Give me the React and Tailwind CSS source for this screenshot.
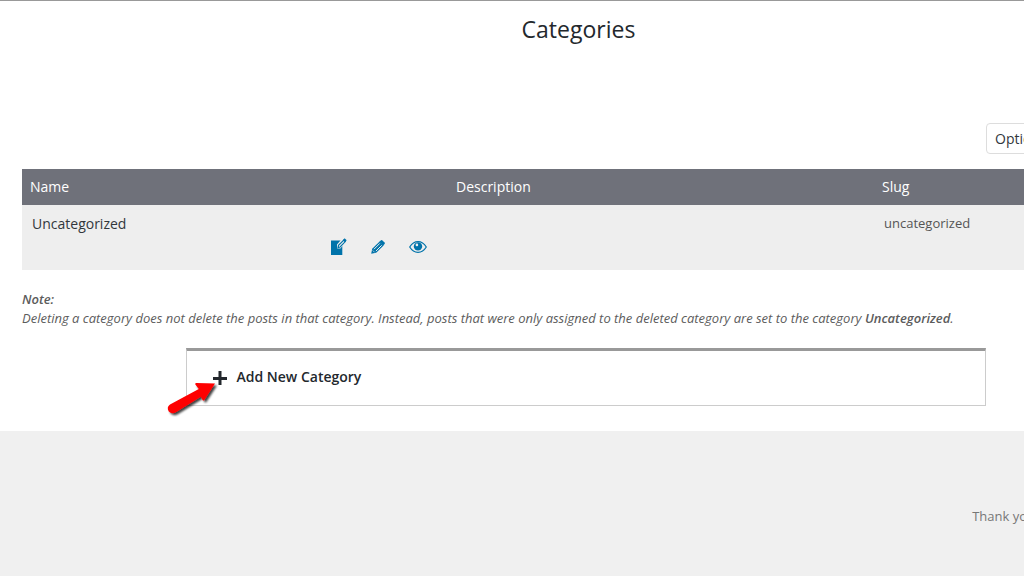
import React from 'react';

const columns = ['Name', 'Description', 'Slug'];

const ComposeIcon = () => (
  <svg width="16" height="18" viewBox="0 0 16 18" aria-hidden="true">
    <path d="M0 2.5h9.5L6 6.5v4h3.4L11.3 8v9H0z" fill="#0073aa" />
    <path d="M7 9.6l.5-2.2 5.3-5.3 1.5 1.5-5.2 5.4z" fill="#eee" stroke="#0073aa" strokeWidth="1.1" />
    <path d="M11.8 2.2L13.6.3l2.1 2-1.8 1.9z" fill="#0073aa" />
  </svg>
);

const PencilIcon = () => (
  <svg width="14" height="14" viewBox="0 0 14 14" aria-hidden="true">
    <path d="M.2 13.8l1-5L8.6 1.4l4 4L5.2 12.8z" fill="#0073aa" />
    <path d="M3 9.2l5.8-5.8M4.9 11.1l5.8-5.8" stroke="#eee" strokeWidth="1" />
    <path d="M8.4 1.8L10 .3q.7-.5 1.4.1l2.2 2.2q.6.7 0 1.4l-1.5 1.6z" fill="#0073aa" />
    <path d="M1.7 10.4l1.9 1.9" stroke="#eee" strokeWidth=".7" />
  </svg>
);

const EyeIcon = () => (
  <svg width="18" height="13" viewBox="0 0 18 13" aria-hidden="true">
    <path d="M.7 7Q4 1.7 9 1.7T17.3 7Q14 12.3 9 12.3T.7 7z" fill="#eee" stroke="#0073aa" strokeWidth="1.2" />
    <circle cx="9" cy="6.4" r="4.2" fill="#0073aa" />
    <circle cx="7.9" cy="4.9" r="1.3" fill="#eee" />
  </svg>
);

const PlusIcon = () => (
  <svg width="14" height="16" viewBox="0 0 14 16" aria-hidden="true">
    <path d="M5.5 2h3v6H14v3H8.5v5h-3v-5H0V8h5.5z" fill="#23282d" />
  </svg>
);

const Arrow = () => (
  <svg
    className="pointer-events-none absolute top-7 -left-5"
    width="60"
    height="45"
    viewBox="0 0 60 45"
    aria-hidden="true"
  >
    <defs>
      <filter id="arrow-shadow" x="-20%" y="-20%" width="150%" height="150%">
        <feDropShadow dx="2" dy="2" stdDeviation="1.2" floodColor="#000" floodOpacity="0.75" />
      </filter>
    </defs>
    <path
      d="M3 25.4L31.8 10L28.2 5.3Q27.8 4 29.2 3.9L48 4.5L37.4 21Q36.4 22 35.6 21L33.8 17.8L8.4 33.6Q4.6 35.4 1.8 32.6Q-.8 28 3 25.4z"
      fill="#fe0000"
      filter="url(#arrow-shadow)"
    />
  </svg>
);

const CategoryTable = () => (
  <table className="w-full table-fixed border-collapse text-left">
    <colgroup>
      <col className="w-[426px]" />
      <col className="w-[426px]" />
      <col />
    </colgroup>
    <thead>
      <tr className="h-9 bg-[#6f717a] text-sm text-white">
        {columns.map((name) => (
          <th key={name} className="px-2 font-medium">{name}</th>
        ))}
      </tr>
    </thead>
    <tbody>
      <tr className="bg-[#eeeeee] align-top">
        <td className="px-2.5 pt-2 pb-3">
          <a href="#uncategorized" className="block text-sm leading-[22px] text-[#32373c]">Uncategorized</a>
          <div className="flex h-[23px] items-center justify-end gap-6 pr-[11px]">
            <button aria-label="Quick edit" className="flex w-4"><ComposeIcon /></button>
            <button aria-label="Edit" className="flex w-3.5"><PencilIcon /></button>
            <button aria-label="View" className="flex w-[18px]"><EyeIcon /></button>
          </div>
        </td>
        <td />
        <td className="px-2.5 pt-2 text-[13px] leading-5 text-[#555555]">uncategorized</td>
      </tr>
    </tbody>
  </table>
);

const App = () => {
  return (
    <div className="overflow-hidden bg-white font-['Open_Sans',sans-serif] text-[#555555]">
      <div className="min-w-[1157px] border-t border-[#999999]">
        <h1 className="pt-3 text-center text-[23px] leading-8 text-[#23282d]">Categories</h1>

        <main className="pr-2 pl-[22px]">
          <div className="mt-[78px] mb-[15px] flex justify-end">
            <button className="h-[31px] w-[163px] rounded-sm border border-[#dddddd] bg-white px-2 text-left text-sm text-[#32373c]">
              Options
            </button>
          </div>

          <CategoryTable />

          <p className="mt-5 text-[13px] leading-[19px] text-[#5c5c5c] italic">
            <strong className="font-semibold">Note:</strong>
            <br />
            Deleting a category does not delete the posts in that category. Instead, posts that were only assigned to
            the deleted category are set to the category <strong className="font-semibold">Uncategorized</strong>.
          </p>

          <section className="relative mx-auto mt-5 mb-[25px] max-w-[800px] border border-t-[3px] border-[#cccccc] border-t-[#999999]">
            <button className="flex h-[54px] w-full items-center gap-2.5 px-[26px] pb-0.5 text-sm font-semibold text-[#23282d]">
              <PlusIcon />
              Add New Category
            </button>
            <Arrow />
          </section>
        </main>

        <footer className="min-h-[145px] bg-[#f0f0f0] pt-[75px] pr-[122px] text-right text-[13px] leading-5 text-[#777777]">
          Thank you
        </footer>
      </div>
    </div>
  );
};

export default App;
